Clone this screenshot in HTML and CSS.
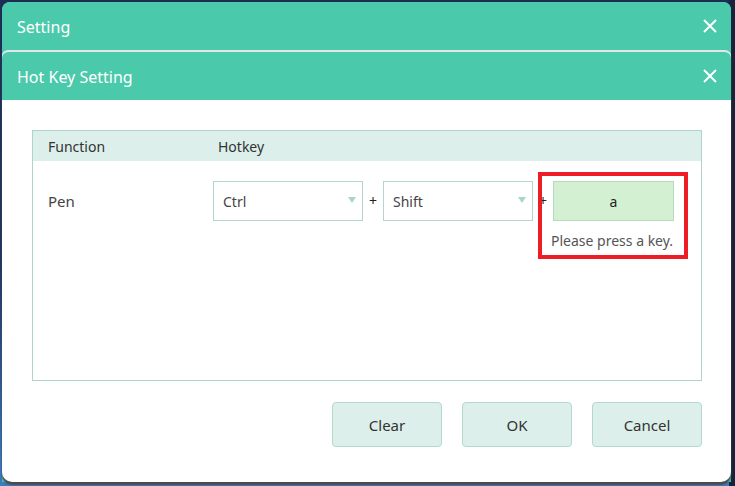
FILE: index.html
```html
<!DOCTYPE html>
<html lang="en">
<head>
    <meta charset="UTF-8">
    <meta name="viewport" content="width=device-width, initial-scale=1.0">
    <title>Hot Key Setting</title>
    <link rel="stylesheet" href="styles.css">
</head>
<body>
    <div id="desktop">
        <div class="window outer">
            <div class="titlebar">
                <span class="title">Setting</span>
                <div class="close">
                    <svg width="16" height="16" viewBox="0 0 16 16"><path d="M2 2L14 14M14 2L2 14" stroke="#fff" stroke-width="2" fill="none"/></svg>
                </div>
            </div>

            <div class="window inner">
                <div class="titlebar">
                    <span class="title">Hot Key Setting</span>
                    <div class="close">
                        <svg width="16" height="16" viewBox="0 0 16 16"><path d="M2 2L14 14M14 2L2 14" stroke="#fff" stroke-width="2" fill="none"/></svg>
                    </div>
                </div>

                <div class="content">
                    <div class="hkTable">
                        <div class="hkHead">
                            <div class="colFn">Function</div>
                            <div>Hotkey</div>
                        </div>
                        <div class="hkRow">
                            <div class="colFn">Pen</div>
                            <div class="keys">
                                <div class="select">
                                    <span>Ctrl</span>
                                    <i class="arrow"></i>
                                </div>
                                <span class="plus">+</span>
                                <div class="select">
                                    <span>Shift</span>
                                    <i class="arrow"></i>
                                </div>
                                <span class="plus">+</span>
                                <div class="keyWrap">
                                    <div class="keyInput">a</div>
                                    <div class="hint">Please press a key.</div>
                                    <div class="mark"></div>
                                </div>
                            </div>
                        </div>
                    </div>

                    <div class="btnWrap">
                        <div class="btn">Clear</div>
                        <div class="btn">OK</div>
                        <div class="btn">Cancel</div>
                    </div>
                </div>
            </div>
        </div>
    </div>
</body>
</html>
```

FILE: styles.css
```css
*{
    margin: 0;
    padding: 0;
    box-sizing: border-box;
}

body{
    width: 735px;
    height: 486px;
    overflow: hidden;
    font-family: "Noto Sans", "Open Sans", sans-serif;
    background: linear-gradient(to bottom, #1c2c55 0%, #1f3463 55%, #3b7cc4 100%);
}

#desktop{
    padding: 2px 4px 0 2px;
    height: 486px;
    background: linear-gradient(to right, transparent 729px, #18223a 729px);
}

.window{
    width: 729px;
    border-radius: 8px 8px 0 0;
}

.outer{
    background-color: #4bc9ab;
}

.inner{
    border-top: 2px solid #e3e6e6;
    border-radius: 6px 6px 10px 10px;
    background-color: #fff;
    box-shadow: 0 3px 2px #4a4a4a;
}

.titlebar{
    height: 48px;
    display: flex;
    align-items: center;
    justify-content: space-between;
    padding: 0 13px 0 15px;
    background-color: #4bc9ab;
    border-radius: 8px 8px 0 0;
    color: white;
}

.inner .titlebar{
    border-radius: 6px 6px 0 0;
}

.title{
    font-size: 16px;
    padding-top: 2px;
}

.close{
    display: flex;
    width: 16px;
    height: 16px;
}

.content{
    height: 382px;
    padding: 30px 29px 0 30px;
}

.hkTable{
    height: 251px;
    border: 1px solid #afd4ca;
}

.hkHead{
    height: 30px;
    display: flex;
    align-items: center;
    background-color: #dcefea;
    font-size: 14px;
    color: #333;
}

.hkHead .colFn{
    width: 185px;
    padding-left: 15px;
}

.hkRow{
    display: flex;
    align-items: flex-start;
    padding-top: 20px;
    color: #444;
}

.hkRow .colFn{
    width: 180px;
    padding-left: 15px;
    line-height: 40px;
    font-size: 15px;
}

.keys{
    display: flex;
    align-items: flex-start;
}

.select{
    width: 150px;
    height: 40px;
    display: flex;
    align-items: center;
    justify-content: space-between;
    padding: 0 6px 0 9px;
    border: 1px solid #b3d7cd;
    font-size: 14px;
    color: #444;
}

.arrow{
    width: 0;
    height: 0;
    border-left: 4px solid transparent;
    border-right: 4px solid transparent;
    border-top: 6px solid #a9d6ca;
    margin-bottom: 2px;
}

.plus{
    width: 20px;
    line-height: 40px;
    text-align: center;
    font-size: 14px;
    color: #222;
}

.keyWrap{
    position: relative;
}

.keyInput{
    width: 121px;
    height: 40px;
    display: flex;
    align-items: center;
    justify-content: center;
    background-color: #d3f1d2;
    border: 1px solid #b7d9bf;
    font-size: 14px;
    color: #222;
}

.hint{
    margin-top: 10px;
    margin-left: -2px;
    font-size: 14px;
    color: #555;
}

/* red highlight drawn over the key box */
.mark{
    position: absolute;
    left: -15px;
    top: -9px;
    width: 150px;
    height: 87px;
    border: 4px solid #ee1c25;
}

.btnWrap{
    display: flex;
    justify-content: flex-end;
    gap: 20px;
    margin-top: 21px;
}

.btn{
    width: 110px;
    height: 45px;
    display: flex;
    align-items: center;
    justify-content: center;
    background-color: #dcefea;
    border: 1px solid #b3d8ce;
    border-radius: 4px;
    font-size: 15px;
    color: #333;
}
```
